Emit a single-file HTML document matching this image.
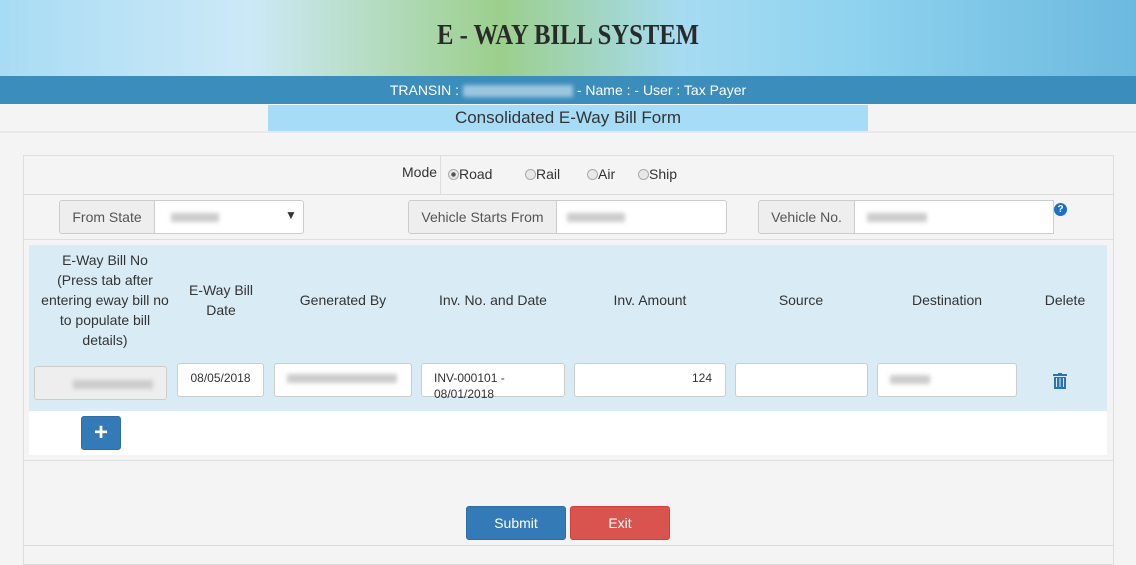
<!DOCTYPE html>
<html><head><style>
*{box-sizing:border-box;margin:0;padding:0}
body{width:1136px;height:558px;background:#f4f4f4;font-family:"Liberation Sans",sans-serif;font-size:14px;color:#333;position:relative;overflow:hidden}
.a{position:absolute}
.hdr{left:0;top:0;width:1136px;height:76px;background:linear-gradient(90deg,#a8dcf4 0%,#cde9f7 22%,#9ccf8c 44%,#a6dbf2 60%,#8fd3ef 75%,#6cb9df 100%)}
.title{left:0;top:20px;width:1136px;text-align:center;font-family:"Liberation Serif",serif;font-weight:bold;font-size:28px;color:#2a2a2a;letter-spacing:0px;transform:scaleX(0.88)}
.bar{left:0;top:76px;width:1136px;height:28px;background:#3b8dbb;color:#fff;text-align:center;line-height:28px;font-size:14px}
.blur{display:inline-block;width:110px;height:12px;background:#9cc6df;filter:blur(2px);vertical-align:middle}
.ft{left:268px;top:105px;width:600px;height:26px;background:#a6dcf6;text-align:center;line-height:26px;font-size:17px}
.box{border:1px solid #ddd}
.inp{background:#fff;border:1px solid #ccc;border-radius:3px}
.ad{background:#eee;border:1px solid #ccc;border-radius:3px 0 0 3px;text-align:center;line-height:32px;color:#555}
.bl{display:inline-block;height:9px;background:#ccc;filter:blur(2px)}
.th{text-align:center;color:#333;font-size:14px;line-height:20px}
.rad{display:inline-block;width:11px;height:11px;border-radius:50%;border:1px solid #aaa;background:#e8e8e8;vertical-align:-1px}
</style></head><body>
<div class="a hdr"></div>
<div class="a title">E - WAY BILL SYSTEM</div>
<div class="a bar">TRANSIN : <span class="blur"></span> - Name : - User : Tax Payer</div>
<div class="a ft">Consolidated E-Way Bill Form</div>
<div class="a" style="left:0;top:131px;width:1136px;height:2px;background:#e8e8e8"></div>
<div class="a box" style="left:23px;top:155px;width:1091px;height:410px"></div>
<div class="a" style="left:23px;top:194px;width:1091px;height:1px;background:#ddd"></div>
<div class="a" style="left:23px;top:239px;width:1091px;height:1px;background:#ddd"></div>
<div class="a" style="left:440px;top:156px;width:1px;height:38px;background:#ddd"></div>
<div class="a" style="left:402px;top:164px">Mode</div>
<div class="a" style="left:448px;top:166px"><span class="rad" style="background:radial-gradient(#555 30%,#e8e8e8 40%)"></span>Road</div>
<div class="a" style="left:525px;top:166px"><span class="rad"></span>Rail</div>
<div class="a" style="left:587px;top:166px"><span class="rad"></span>Air</div>
<div class="a" style="left:638px;top:166px"><span class="rad"></span>Ship</div>
<div class="a ad" style="left:59px;top:200px;width:96px;height:34px">From State</div>
<div class="a inp" style="left:154px;top:200px;width:150px;height:34px;border-radius:0 3px 3px 0"><span class="bl a" style="left:16px;top:12px;width:48px"></span><span class="a" style="left:130px;top:7px;font-size:12px">▼</span></div>
<div class="a ad" style="left:408px;top:200px;width:149px;height:34px">Vehicle Starts From</div>
<div class="a inp" style="left:556px;top:200px;width:171px;height:34px;border-radius:0 3px 3px 0"><span class="bl a" style="left:10px;top:12px;width:58px"></span></div>
<div class="a ad" style="left:758px;top:200px;width:97px;height:34px">Vehicle No.</div>
<div class="a inp" style="left:854px;top:200px;width:200px;height:34px;border-radius:0"><span class="bl a" style="left:12px;top:12px;width:60px"></span></div>
<div class="a" style="left:1054px;top:203px;width:13px;height:13px;border-radius:50%;background:#1a6fc9;color:#fff;font-size:10px;font-weight:bold;text-align:center;line-height:13px">?</div>
<div class="a" style="left:29px;top:245px;width:1078px;height:166px;background:#d9ecf6"></div>
<div class="a" style="left:29px;top:411px;width:1078px;height:44px;background:#fff"></div>
<div class="a" style="left:23px;top:460px;width:1091px;height:1px;background:#ddd"></div>
<div class="a th" style="left:30px;top:250px;width:150px">E-Way Bill No<br>(Press tab after<br>entering eway bill no<br>to populate bill<br>details)</div>
<div class="a th" style="left:176px;top:280px;width:90px">E-Way Bill<br>Date</div>
<div class="a th" style="left:272px;top:290px;width:142px">Generated By</div>
<div class="a th" style="left:420px;top:290px;width:146px">Inv. No. and Date</div>
<div class="a th" style="left:574px;top:290px;width:152px">Inv. Amount</div>
<div class="a th" style="left:734px;top:290px;width:134px">Source</div>
<div class="a th" style="left:876px;top:290px;width:142px">Destination</div>
<div class="a th" style="left:1030px;top:290px;width:70px">Delete</div>
<div class="a inp" style="left:34px;top:366px;width:133px;height:34px;background:#eee"><span class="bl a" style="left:38px;top:13px;width:80px"></span></div>
<div class="a inp" style="left:177px;top:363px;width:87px;height:34px;text-align:center;line-height:28px;font-size:12px">08/05/2018</div>
<div class="a inp" style="left:274px;top:363px;width:138px;height:34px"><span class="bl a" style="left:12px;top:10px;width:110px"></span></div>
<div class="a inp" style="left:421px;top:363px;width:144px;height:34px;font-size:12px;line-height:16px;padding:6px 12px">INV-000101 -<br>08/01/2018</div>
<div class="a inp" style="left:574px;top:363px;width:152px;height:34px;font-size:12px;text-align:right;line-height:28px;padding-right:13px">124</div>
<div class="a inp" style="left:735px;top:363px;width:133px;height:34px"></div>
<div class="a inp" style="left:877px;top:363px;width:140px;height:34px"><span class="bl a" style="left:12px;top:11px;width:40px"></span></div>
<svg class="a" style="left:1053px;top:373px" width="14" height="16" viewBox="0 0 14 16"><rect x="0" y="1" width="14" height="2" fill="#2a74b5"/><rect x="5" y="0" width="4" height="2" fill="#2a74b5"/><rect x="1" y="4" width="12" height="12" fill="#2a74b5"/><rect x="3" y="5" width="1" height="9" fill="#d9ecf6"/><rect x="6.5" y="5" width="1" height="9" fill="#d9ecf6"/><rect x="10" y="5" width="1" height="9" fill="#d9ecf6"/></svg>
<div class="a" style="left:81px;top:416px;width:40px;height:34px;background:#337ab7;border:1px solid #2e6da4;border-radius:3px;color:#fff;font-size:24px;font-weight:bold;text-align:center;line-height:32px">+</div>
<div class="a" style="left:466px;top:506px;width:100px;height:34px;background:#337ab7;border:1px solid #2e6da4;border-radius:3px;color:#fff;text-align:center;line-height:32px">Submit</div>
<div class="a" style="left:570px;top:506px;width:100px;height:34px;background:#d9534f;border:1px solid #d43f3a;border-radius:3px;color:#fff;text-align:center;line-height:32px">Exit</div>
<div class="a" style="left:23px;top:545px;width:1091px;height:1px;background:#ddd"></div>
</body></html>
